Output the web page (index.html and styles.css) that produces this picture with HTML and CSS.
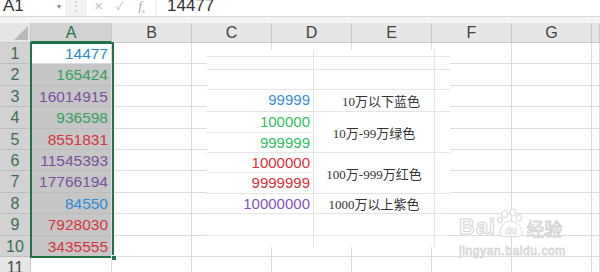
FILE: index.html
```html
<!DOCTYPE html>
<html lang="zh-CN">
<head>
    <meta charset="UTF-8">
    <title>数字颜色分段</title>
    <link rel="stylesheet" href="styles.css">
</head>
<body>
    <div class="toolbar">
        <div class="namebox">A1<span class="caret">&#9662;</span></div>
        <div class="dots">&#8942;</div>
        <div class="fxbox"><span class="x">&#10005;</span><span class="ok">&#10003;</span><span class="fx">f<sub>x</sub></span></div>
        <div class="formula">14477</div>
    </div>
    <div class="band"></div>

    <div class="sheet">
        <div class="corner"></div>
        <div class="ch sel">A</div>
        <div class="ch">B</div>
        <div class="ch">C</div>
        <div class="ch">D</div>
        <div class="ch">E</div>
        <div class="ch">F</div>
        <div class="ch">G</div>
        <div class="ch"></div>

        <div class="rh sel">1</div><div class="c a1 blue">14477</div><div class="c"></div><div class="c"></div><div class="c"></div><div class="c"></div><div class="c"></div><div class="c"></div><div class="c"></div>
        <div class="rh sel">2</div><div class="c asel green">165424</div><div class="c"></div><div class="c"></div><div class="c"></div><div class="c"></div><div class="c"></div><div class="c"></div><div class="c"></div>
        <div class="rh sel">3</div><div class="c asel purple">16014915</div><div class="c"></div><div class="c"></div><div class="c"></div><div class="c"></div><div class="c"></div><div class="c"></div><div class="c"></div>
        <div class="rh sel">4</div><div class="c asel green">936598</div><div class="c"></div><div class="c"></div><div class="c"></div><div class="c"></div><div class="c"></div><div class="c"></div><div class="c"></div>
        <div class="rh sel">5</div><div class="c asel red">8551831</div><div class="c"></div><div class="c"></div><div class="c"></div><div class="c"></div><div class="c"></div><div class="c"></div><div class="c"></div>
        <div class="rh sel">6</div><div class="c asel purple">11545393</div><div class="c"></div><div class="c"></div><div class="c"></div><div class="c"></div><div class="c"></div><div class="c"></div><div class="c"></div>
        <div class="rh sel">7</div><div class="c asel purple">17766194</div><div class="c"></div><div class="c"></div><div class="c"></div><div class="c"></div><div class="c"></div><div class="c"></div><div class="c"></div>
        <div class="rh sel">8</div><div class="c asel blue">84550</div><div class="c"></div><div class="c"></div><div class="c"></div><div class="c"></div><div class="c"></div><div class="c"></div><div class="c"></div>
        <div class="rh sel">9</div><div class="c asel red">7928030</div><div class="c"></div><div class="c"></div><div class="c"></div><div class="c"></div><div class="c"></div><div class="c"></div><div class="c"></div>
        <div class="rh sel">10</div><div class="c asel red">3435555</div><div class="c"></div><div class="c"></div><div class="c"></div><div class="c"></div><div class="c"></div><div class="c"></div><div class="c"></div>
        <div class="rh">11</div><div class="c"></div><div class="c"></div><div class="c"></div><div class="c"></div><div class="c"></div><div class="c"></div><div class="c"></div><div class="c"></div>
    </div>

    <!-- 选中区域 A1:A10 -->
    <div class="selection"><span class="handle"></span></div>

    <!-- 贴上去的说明图 -->
    <div class="pasted">
        <div class="p first"></div><div class="p first mid"></div><div class="p first last"></div>
        <div class="p"></div><div class="p mid"></div><div class="p last"></div>
        <div class="p"></div><div class="p mid"></div><div class="p last"></div>
        <div class="p num pblue">99999</div><div class="p mid note shift">10万以下蓝色</div><div class="p last"></div>
        <div class="p num pgreen">100000</div><div class="p mid note span2">10万-99万绿色</div><div class="p last span2"></div>
        <div class="p num pgreen">999999</div>
        <div class="p num pred">1000000</div><div class="p mid note span2">100万-999万红色</div><div class="p last span2"></div>
        <div class="p num pred">9999999</div>
        <div class="p num ppurple">10000000</div><div class="p mid note">1000万以上紫色</div><div class="p last"></div>
        <div class="p"></div><div class="p mid"></div><div class="p last"></div>
        <div class="p"></div><div class="p mid"></div><div class="p last"></div>
    </div>

    <!-- 水印 -->
    <div class="watermark">
        <div class="wm-top">
            <span class="bai">Bai</span>
            <svg class="paw" width="30" height="30" viewBox="0 0 30 30">
                <ellipse cx="9" cy="6" rx="3" ry="3.6" fill="#fff" stroke="#d9d9d9"/>
                <ellipse cx="17" cy="4.5" rx="3" ry="3.6" fill="#fff" stroke="#d9d9d9"/>
                <ellipse cx="4" cy="12" rx="2.6" ry="3.2" fill="#fff" stroke="#d9d9d9"/>
                <ellipse cx="23" cy="10" rx="2.6" ry="3.2" fill="#fff" stroke="#d9d9d9"/>
                <path d="M4 25 C4 17 10 13 14 13 C19 13 26 18 26 25 C26 29 20 29 15 28 C10 29 4 29 4 25 Z" fill="#fff" stroke="#d9d9d9"/>
                <text x="15" y="26" text-anchor="middle" font-family="Liberation Sans, sans-serif" font-size="10" font-weight="bold" fill="#fff" stroke="#d9d9d9" stroke-width="0.6">du</text>
            </svg>
            <span class="jy">经验</span>
        </div>
        <div class="wm-url">jingyan.baidu.com</div>
    </div>
</body>
</html>
```

FILE: styles.css
```css
* {
    box-sizing: border-box;
}

body {
    margin: 0;
    width: 600px;
    height: 272px;
    overflow: hidden;
    background: #fff;
    font-family: "Liberation Sans", "Noto Sans CJK SC", sans-serif;
    color: #333;
    position: relative;
}

/* 编辑栏 */
.toolbar {
    height: 17px;
    display: flex;
    background: #f3f3f3;
    border-bottom: 1px solid #d6d6d6;
    overflow: hidden;
}

.namebox {
    width: 65px;
    background: #fff;
    font-size: 17px;
    line-height: 12px;
    padding-left: 3px;
    position: relative;
    color: #333;
}

.caret {
    position: absolute;
    left: 57px;
    top: 1px;
    font-size: 8px;
    color: #888;
}

.dots {
    width: 22px;
    text-align: center;
    color: #c4c4c4;
    font-size: 12px;
    line-height: 12px;
}

.fxbox {
    width: 68px;
    background: #fff;
    display: flex;
    color: #c0c0c0;
    font-size: 11px;
    line-height: 12px;
}

.fxbox .x {
    margin-left: 7px;
}

.fxbox .ok {
    margin-left: 13px;
}

.fxbox .fx {
    margin-left: 15px;
    font-family: "Liberation Serif", serif;
    font-style: italic;
    color: #999;
    font-size: 12px;
}

.fxbox sub {
    font-size: 7px;
}

.formula {
    flex: 1;
    margin-left: 2px;
    background: #fff;
    font-size: 17px;
    line-height: 12px;
    padding-left: 10px;
    color: #333;
}

.band {
    height: 6px;
    background: #f3f3f3;
}

/* 表格 */
.sheet {
    display: grid;
    grid-template-columns: 31px 81px repeat(6, 80px) 8px;
    grid-template-rows: 20px repeat(10, 21.4px) 1fr;
    height: 249px;
}

.corner {
    background: #e6e6e6;
    border-right: 1px solid #c8c8c8;
    border-bottom: 1px solid #c8c8c8;
    position: relative;
}

.corner::after {
    content: "";
    position: absolute;
    right: 2px;
    bottom: 2px;
    border-left: 14px solid transparent;
    border-bottom: 14px solid #b9b9b9;
}

.ch {
    background: #e6e6e6;
    border-right: 1px solid #c9c9c9;
    border-bottom: 1px solid #c9c9c9;
    text-align: center;
    font-size: 16px;
    line-height: 20px;
    color: #444;
}

.ch.sel {
    background: #d2d2d2;
    color: #217346;
    border-bottom: 2px solid #217346;
}

.rh {
    background: #e6e6e6;
    border-right: 1px solid #c9c9c9;
    border-bottom: 1px solid #c9c9c9;
    text-align: center;
    font-size: 16px;
    line-height: 21px;
    color: #444;
}

.rh.sel {
    background: #d2d2d2;
    color: #3b6e50;
    border-bottom-color: #bdbdbd;
}

.c {
    border-right: 1px solid #dcdcdc;
    border-bottom: 1px solid #dcdcdc;
    text-align: right;
    font-size: 15.5px;
    line-height: 21px;
    padding-right: 3px;
}

.asel {
    background: #c6c6c6;
    border-bottom-color: #bdbdbd;
}

.blue { color: #2e8bd6; }
.green { color: #35a05c; }
.purple { color: #7a509f; }
.red { color: #d8333c; }

.selection {
    position: absolute;
    left: 30px;
    top: 42px;
    width: 84px;
    height: 216px;
    border: 2px solid #217346;
}

.handle {
    position: absolute;
    right: -5px;
    bottom: -5px;
    width: 6px;
    height: 6px;
    background: #217346;
    border: 1px solid #fff;
}

/* 说明图 */
.pasted {
    position: absolute;
    left: 207px;
    top: 50px;
    width: 243px;
    height: 197px;
    background: #fff;
    display: grid;
    grid-template-columns: 106px 122px 15px;
    grid-template-rows: 6px 13px 20px 22px 21px 20px 20px 21px 20px 22px 12px;
}

.p {
    border-top: 1px solid #e4e4e4;
}

.p.first {
    border-top: none;
}

.p.mid {
    border-left: 1px solid #e4e4e4;
    border-right: 1px solid #e4e4e4;
}

.span2 {
    grid-row: span 2;
}

.num {
    text-align: right;
    padding-right: 3px;
    font-size: 15px;
    line-height: 20px;
}

.note {
    display: flex;
    align-items: center;
    justify-content: center;
    font-family: "Liberation Serif", "Noto Sans CJK SC", serif;
    font-size: 13px;
    color: #333;
}

.note.shift {
    padding-left: 14px;
}

.pblue { color: #3a8fd9; }
.pgreen { color: #2fbf63; }
.pred { color: #d9303a; }
.ppurple { color: #8352bf; }

/* 水印 */
.watermark {
    position: absolute;
    left: 459px;
    top: 206px;
    color: #fff;
}

.wm-top {
    display: flex;
    align-items: flex-end;
    height: 32px;
}

.bai {
    font-size: 22px;
    font-weight: bold;
    line-height: 22px;
    -webkit-text-stroke: 1px #d6d6d6;
    letter-spacing: 1px;
}

.jy {
    font-family: "Noto Sans CJK SC", sans-serif;
    font-size: 18px;
    line-height: 20px;
    -webkit-text-stroke: 1px #d6d6d6;
}

.wm-url {
    margin-top: 7px;
    font-size: 12px;
    line-height: 12px;
    letter-spacing: 0.6px;
    -webkit-text-stroke: 0.8px #d6d6d6;
}
```
